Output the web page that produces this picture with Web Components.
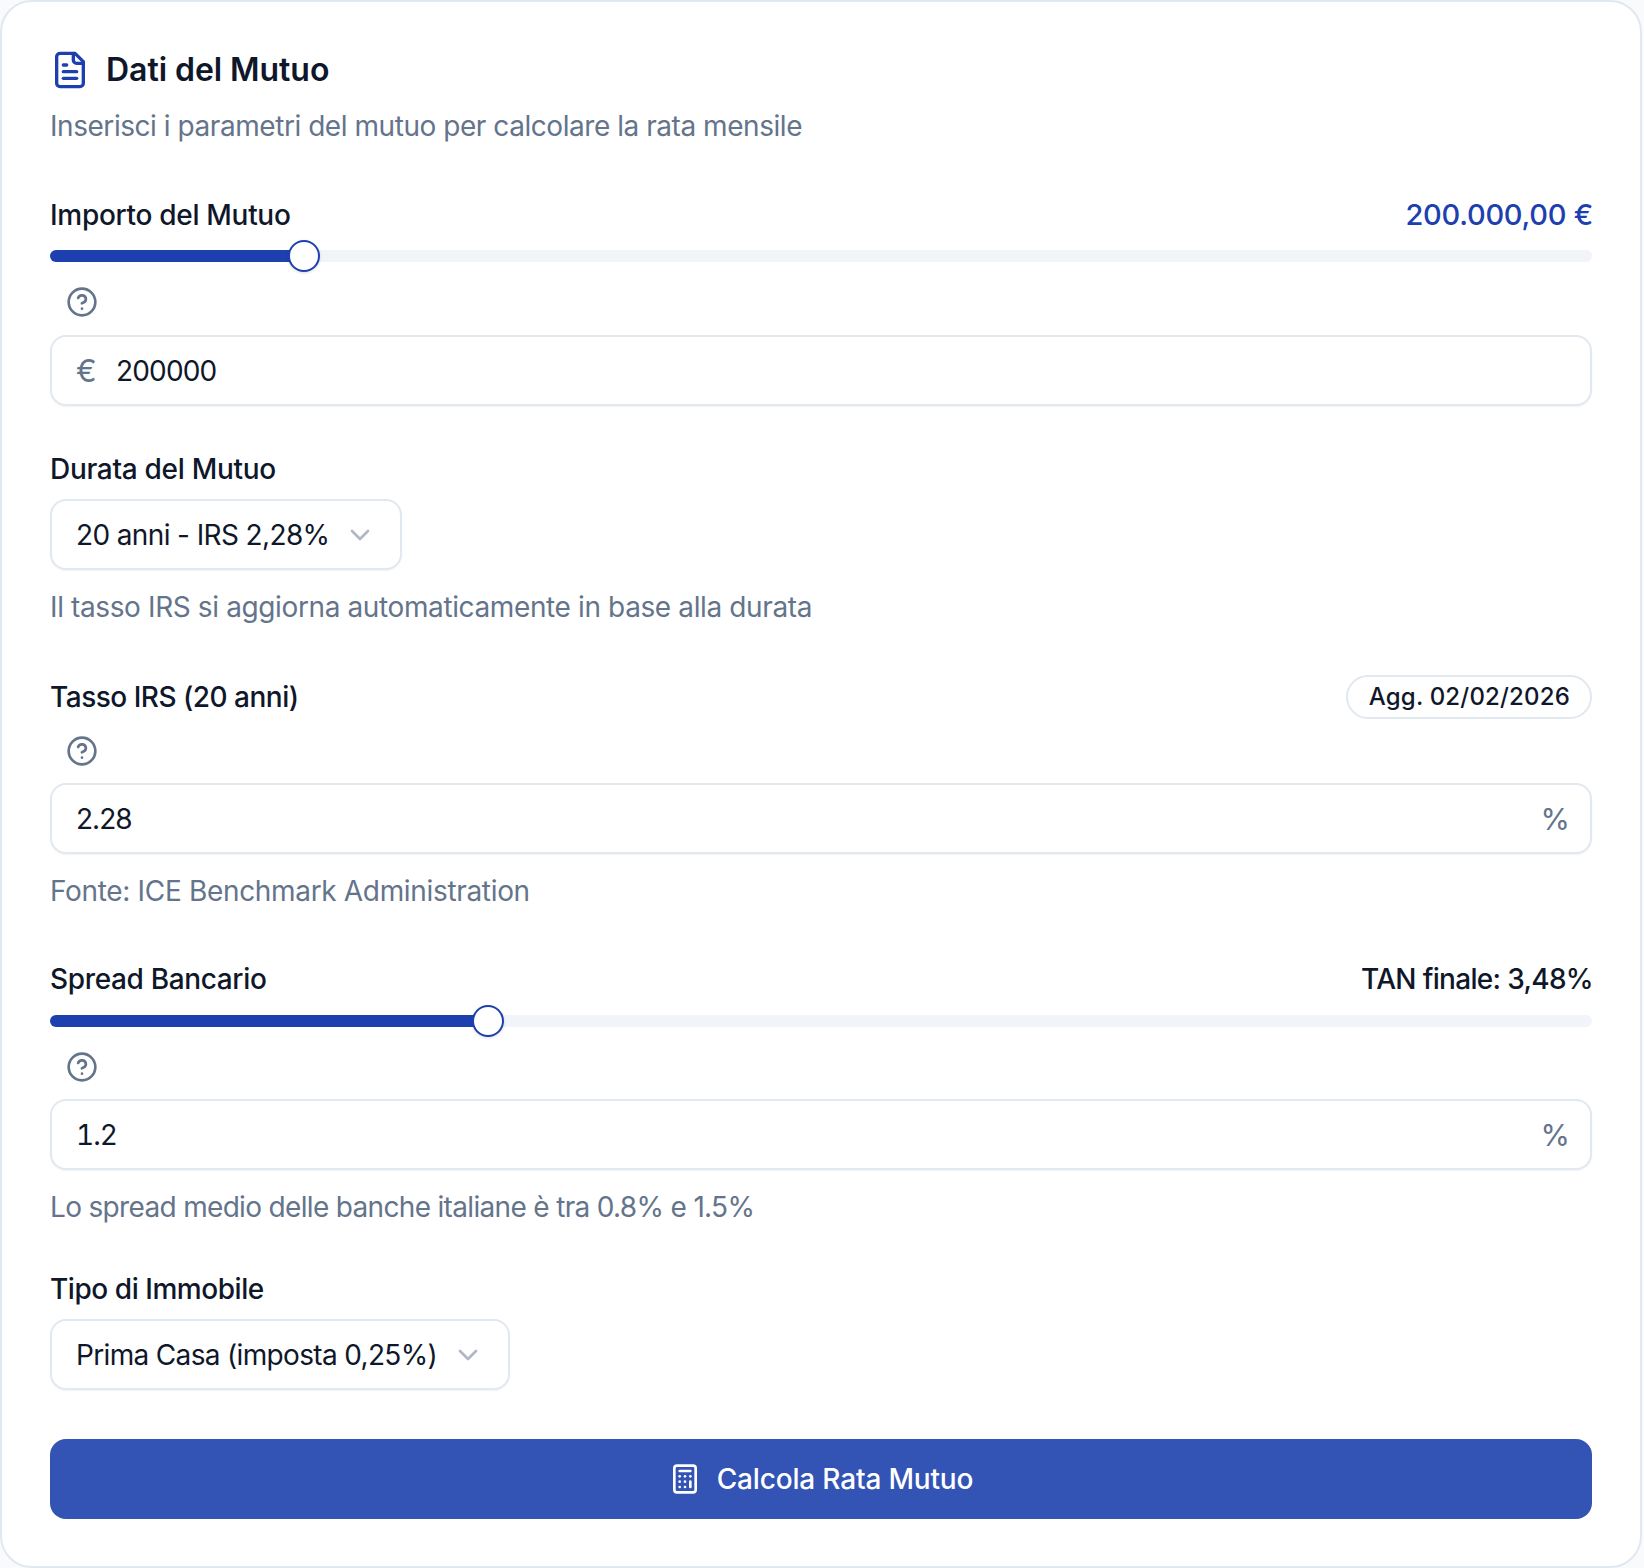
<!DOCTYPE html>
<html lang="it">
<head>
<meta charset="utf-8">
<title>Dati del Mutuo</title>
<style>
  html, body { margin: 0; background: #f8fafc; }
  body { font-family: Inter, "Liberation Sans", sans-serif; color: #0f172a; }
</style>
</head>
<body>
<mortgage-card>
  <card-title>Dati del Mutuo</card-title>
  <card-note>Inserisci i parametri del mutuo per calcolare la rata mensile</card-note>

  <form-field style="margin-top:49px">
    <field-head label="Importo del Mutuo" style="margin-bottom:15px;letter-spacing:-.3px"><span style="color:#1e40af;font-size:29px;letter-spacing:-.25px;margin-right:-1px">200.000,00 €</span></field-head>
    <range-bar percent="16.5"></range-bar>
    <help-mark style="margin-top:24px"></help-mark>
    <text-box prefix="€" value="200000" style="letter-spacing:-.8px"></text-box>
  </form-field>

  <form-field style="margin-top:43px">
    <field-head label="Durata del Mutuo" style="margin-bottom:10px;letter-spacing:-.3px"></field-head>
    <select-box value="20 anni - IRS 2,28%"></select-box>
    <card-note class="hint" style="margin-top:17px">Il tasso IRS si aggiorna automaticamente in base alla durata</card-note>
  </form-field>

  <form-field style="margin-top:48px">
    <field-head label="Tasso IRS (20 anni)" style="margin-bottom:16px;height:44px;letter-spacing:-.5px"><date-chip>Agg. 02/02/2026</date-chip></field-head>
    <help-mark style="margin-bottom:16px"></help-mark>
    <text-box value="2.28" suffix="%" style="letter-spacing:-1px"></text-box>
    <card-note class="hint" style="margin-top:17px;letter-spacing:-.33px">Fonte: ICE Benchmark Administration</card-note>
  </form-field>

  <form-field style="margin-top:48px">
    <field-head label="Spread Bancario" style="margin-bottom:16px"><span style="letter-spacing:-.68px;margin-right:-1px">TAN finale: 3,48%</span></field-head>
    <range-bar percent="28.4"></range-bar>
    <help-mark style="margin-top:24px;margin-bottom:16px"></help-mark>
    <text-box value="1.2" suffix="%" style="font-variant-numeric:tabular-nums;letter-spacing:-1px"></text-box>
    <card-note class="hint" style="margin-top:17px;letter-spacing:-.67px">Lo spread medio delle banche italiane è tra 0.8% e 1.5%</card-note>
  </form-field>

  <form-field style="margin-top:42px">
    <field-head label="Tipo di Immobile" style="margin-bottom:10px;letter-spacing:-.45px"></field-head>
    <select-box value="Prima Casa (imposta 0,25%)" style="letter-spacing:-.66px"></select-box>
  </form-field>

  <submit-button>Calcola Rata Mutuo</submit-button>
</mortgage-card>

<script>
// small helper so every class stays one template + one shadow root
function shadow(el, html) {
  el.attachShadow({ mode: 'open' }).innerHTML = html;
}

const textStyle = `font-size:28px;line-height:40px;`;

class MortgageCard extends HTMLElement {
  connectedCallback() {
    shadow(this, `
      <style>
        :host { display: block; box-sizing: border-box; width: 1642px; height: 1568px;
          background: #fff; border: 2px solid #e2e8f0; border-radius: 32px; padding: 44px 48px 48px; }
      </style>
      <slot></slot>`);
  }
}

class CardTitle extends HTMLElement {
  connectedCallback() {
    shadow(this, `
      <style>
        :host { display: flex; align-items: center; gap: 16px; height: 48px; }
        svg { width: 40px; height: 40px; flex: none; }
        span { font-size: 32px; font-weight: 600; letter-spacing: -.05px; padding-bottom: 2px; }
      </style>
      <svg viewBox="0 0 24 24" fill="none" stroke="#1e40af" stroke-width="2" stroke-linecap="round" stroke-linejoin="round">
        <path d="M15 2H6a2 2 0 0 0-2 2v16a2 2 0 0 0 2 2h12a2 2 0 0 0 2-2V7z"/>
        <path d="M14 2v4a2 2 0 0 0 2 2h4"/>
        <path d="M10 9H8"/><path d="M16 13H8"/><path d="M16 17H8"/>
      </svg>
      <span><slot></slot></span>`);
  }
}

class CardNote extends HTMLElement {
  connectedCallback() {
    shadow(this, `
      <style>
        :host { display: block; ${textStyle} color: #64748b; margin-top: 12px; letter-spacing: -.45px; }
        :host(.hint) { margin-top: 18px; letter-spacing: -.38px; }
      </style>
      <slot></slot>`);
  }
}

class FormField extends HTMLElement {
  connectedCallback() {
    shadow(this, `<style>:host { display: flex; flex-direction: column; }</style><slot></slot>`);
  }
}

class FieldHead extends HTMLElement {
  connectedCallback() {
    shadow(this, `
      <style>
        :host { display: flex; justify-content: space-between; align-items: center;
          ${textStyle} font-weight: 500; letter-spacing: -.35px; }
      </style>
      <span>${this.getAttribute('label')}</span>
      <slot></slot>`);
  }
}

class RangeBar extends HTMLElement {
  connectedCallback() {
    const pct = this.getAttribute('percent');
    shadow(this, `
      <style>
        :host { display: block; position: relative; height: 12px; border-radius: 6px; background: #f1f5f9; }
        .fill { height: 100%; border-radius: 6px; background: #1e40af; width: ${pct}%; }
        .thumb { position: absolute; top: -10px; left: ${pct}%; margin-left: -16px; box-sizing: border-box;
          width: 32px; height: 32px; border-radius: 50%; background: #fff; border: 2px solid #1e40af;
          box-shadow: 0 1px 3px rgba(15,23,42,.15); }
      </style>
      <div class="fill"></div><div class="thumb"></div>`);
  }
}

class HelpMark extends HTMLElement {
  connectedCallback() {
    shadow(this, `
      <style>
        :host { display: block; height: 32px; margin: 0 0 17px 16px; }
        svg { display: block; width: 32px; height: 32px; }
      </style>
      <svg viewBox="0 0 24 24" fill="none" stroke="#64748b" stroke-width="2" stroke-linecap="round" stroke-linejoin="round">
        <circle cx="12" cy="12" r="10"/>
        <path d="M9.09 9a3 3 0 0 1 5.83 1c0 2-3 3-3 3"/>
        <path d="M12 17h.01"/>
      </svg>`);
  }
}

class TextBox extends HTMLElement {
  connectedCallback() {
    const pre = this.getAttribute('prefix');
    const suf = this.getAttribute('suffix');
    shadow(this, `
      <style>
        :host { display: flex; align-items: center; box-sizing: border-box; height: 71px;
          border: 2px solid #e2e8f0; border-radius: 16px; background: #fff; padding: 0 20px 0 24px;
          box-shadow: 0 1px 2px rgba(15,23,42,.05); ${textStyle} letter-spacing: -.65px; }
        .pre { color: #64748b; font-size: 31px; margin-right: 20px; }
        .val { flex: 1; }
        .suf { color: #64748b; font-size: 30px; letter-spacing: 0; }
      </style>
      ${pre ? `<span class="pre">${pre}</span>` : ''}
      <span class="val">${this.getAttribute('value')}</span>
      ${suf ? `<span class="suf">${suf}</span>` : ''}`);
  }
}

class SelectBox extends HTMLElement {
  connectedCallback() {
    shadow(this, `
      <style>
        :host { display: flex; align-self: flex-start; align-items: center; gap: 15px; box-sizing: border-box; height: 71px;
          border: 2px solid #e2e8f0; border-radius: 16px; background: #fff; padding: 0 24px;
          box-shadow: 0 1px 2px rgba(15,23,42,.05); ${textStyle} letter-spacing: -.62px; }
        svg { width: 32px; height: 32px; flex: none; }
      </style>
      <span>${this.getAttribute('value')}</span>
      <svg viewBox="0 0 24 24" fill="none" stroke="#64748b" stroke-width="2" stroke-linecap="round" stroke-linejoin="round" opacity=".5">
        <path d="m6 9 6 6 6-6"/>
      </svg>`);
  }
}

class DateChip extends HTMLElement {
  connectedCallback() {
    shadow(this, `
      <style>
        :host { display: inline-flex; align-items: center; box-sizing: border-box; height: 44px; padding: 0 20px 0 21px;
          border: 2px solid #e2e8f0; border-radius: 22px; font-size: 24px; line-height: 32px; font-weight: 500;
          letter-spacing: .18px; }
      </style>
      <span><slot></slot></span>`);
  }
}

class SubmitButton extends HTMLElement {
  connectedCallback() {
    shadow(this, `
      <style>
        :host { display: flex; align-items: center; justify-content: center; gap: 16px; height: 80px; margin-top: 49px;
          border-radius: 16px; background: #3353b5; color: #fff; ${textStyle} font-weight: 500; letter-spacing: -.17px; }
        svg { width: 32px; height: 32px; flex: none; }
      </style>
      <svg viewBox="0 0 24 24" fill="none" stroke="#fff" stroke-width="2" stroke-linecap="round" stroke-linejoin="round">
        <rect x="4" y="2" width="16" height="20" rx="2"/>
        <path d="M8 6h8"/><path d="M16 14v4"/><path d="M16 10h.01"/><path d="M12 10h.01"/><path d="M8 10h.01"/>
        <path d="M12 14h.01"/><path d="M8 14h.01"/><path d="M12 18h.01"/><path d="M8 18h.01"/>
      </svg>
      <span><slot></slot></span>`);
  }
}

customElements.define('mortgage-card', MortgageCard);
customElements.define('card-title', CardTitle);
customElements.define('card-note', CardNote);
customElements.define('form-field', FormField);
customElements.define('field-head', FieldHead);
customElements.define('range-bar', RangeBar);
customElements.define('help-mark', HelpMark);
customElements.define('text-box', TextBox);
customElements.define('select-box', SelectBox);
customElements.define('date-chip', DateChip);
customElements.define('submit-button', SubmitButton);
</script>
</body>
</html>
